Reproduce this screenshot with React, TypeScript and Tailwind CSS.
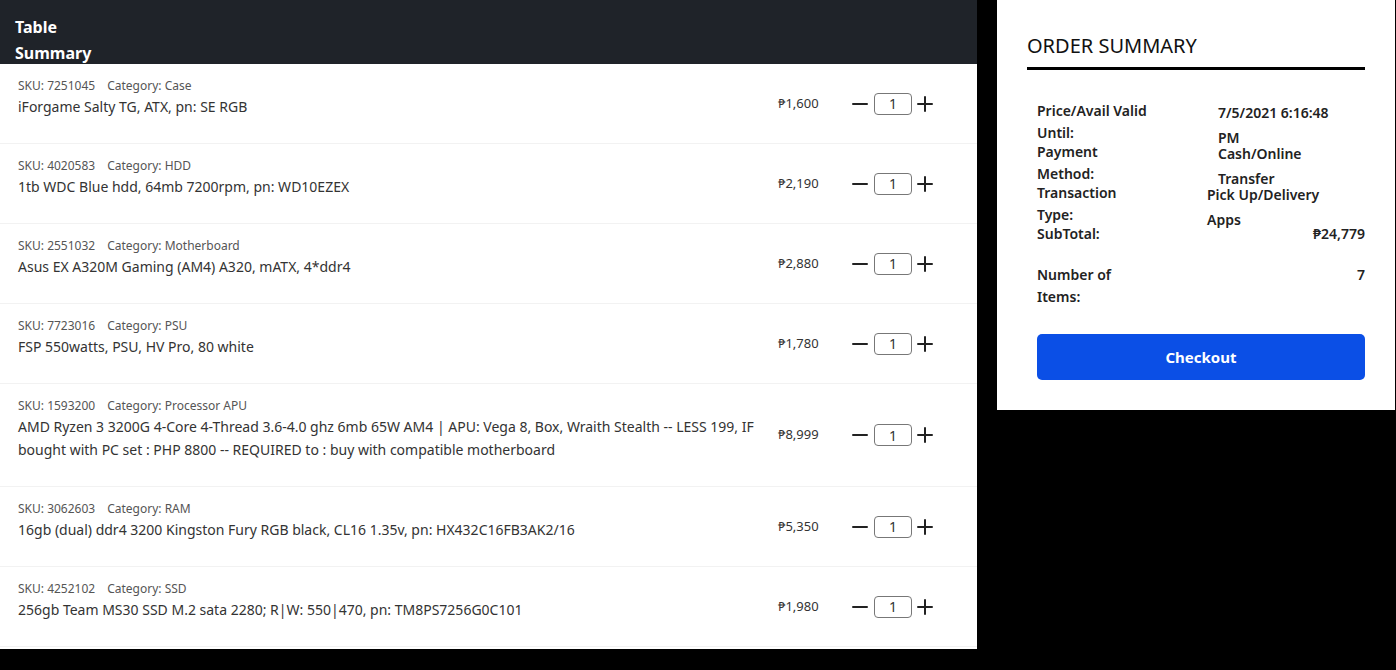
import { Minus, Plus } from 'lucide-react'

interface Item {
  sku: string
  category: string
  name: string
  price: string
}

const items: Item[] = [
  { sku: '7251045', category: 'Case', name: 'iForgame Salty TG, ATX, pn: SE RGB', price: '₱1,600' },
  { sku: '4020583', category: 'HDD', name: '1tb WDC Blue hdd, 64mb 7200rpm, pn: WD10EZEX', price: '₱2,190' },
  { sku: '2551032', category: 'Motherboard', name: 'Asus EX A320M Gaming (AM4) A320, mATX, 4*ddr4', price: '₱2,880' },
  { sku: '7723016', category: 'PSU', name: 'FSP 550watts, PSU, HV Pro, 80 white', price: '₱1,780' },
  {
    sku: '1593200',
    category: 'Processor APU',
    name: 'AMD Ryzen 3 3200G 4-Core 4-Thread 3.6-4.0 ghz 6mb 65W AM4 | APU: Vega 8, Box, Wraith Stealth -- LESS 199, IF bought with PC set : PHP 8800 -- REQUIRED to : buy with compatible motherboard',
    price: '₱8,999',
  },
  { sku: '3062603', category: 'RAM', name: '16gb (dual) ddr4 3200 Kingston Fury RGB black, CL16 1.35v, pn: HX432C16FB3AK2/16', price: '₱5,350' },
  { sku: '4252102', category: 'SSD', name: '256gb Team MS30 SSD M.2 sata 2280; R|W: 550|470, pn: TM8PS7256G0C101', price: '₱1,980' },
]

function ItemRow({ item }: { item: Item }) {
  return (
    <div className="flex items-center border-b border-[#f2f2f2] min-h-[80px]">
      <div className="w-[760px] pl-[18px] pt-[12px] pb-[25px] self-start">
        <div className="text-[12px] leading-[19px] text-[#555]">
          <span>SKU: {item.sku}</span>
          <span className="ml-[12px]">Category: {item.category}</span>
        </div>
        <div className="text-[14px] leading-[23px] text-[#333]">{item.name}</div>
      </div>
      <div className="w-[88px] pl-[18px] text-[13px] text-[#333]">{item.price}</div>
      <div className="flex items-center">
        <button className="flex text-[#222]">
          <Minus size={24} strokeWidth={2} />
        </button>
        <div className="w-[38px] h-[22px] ml-[2px] mr-[1px] border border-[#777] rounded-[4px] text-[14px] text-[#333] flex items-center justify-center">
          1
        </div>
        <button className="flex text-[#222]">
          <Plus size={24} strokeWidth={2} />
        </button>
      </div>
    </div>
  )
}

export default function App() {
  return (
    <div
      className="w-[1396px] h-[670px] bg-black flex items-start overflow-hidden"
      style={{ fontFamily: '"Noto Sans", "Open Sans", sans-serif' }}
    >
      <div className="w-[977px] bg-white pb-[2px]">
        <div className="bg-[#1f2329] h-[64px] pl-[15px] pt-[14px]">
          <div className="w-[90px] text-white font-bold text-[16px] leading-[26px]">Table Summary</div>
        </div>
        {items.map((item) => (
          <ItemRow key={item.sku} item={item} />
        ))}
      </div>

      <div className="ml-[20px] w-[398px] h-[410px] bg-white pt-[33px] px-[30px]">
        <div className="text-[20px] leading-[26px] text-[#111]">ORDER SUMMARY</div>
        <div className="mt-[8px] h-[3px] bg-black" />
        <div className="pl-[10px] pt-[30px] text-[14px] font-semibold text-[#222]">
          <div className="flex h-[41px]">
            <div className="w-[115px] leading-[22px]">Price/Avail Valid Until:</div>
            <div className="ml-[66px] w-[125px] leading-[25px]">7/5/2021 6:16:48 PM</div>
          </div>
          <div className="flex h-[41px]">
            <div className="w-[115px] leading-[22px]">Payment Method:</div>
            <div className="ml-[66px] w-[125px] leading-[25px]">
              Cash/Online
              <br />
              Transfer
            </div>
          </div>
          <div className="flex h-[41px]">
            <div className="w-[115px] leading-[22px]">Transaction Type:</div>
            <div className="ml-[55px] w-[125px] leading-[25px]">Pick Up/Delivery Apps</div>
          </div>
          <div className="flex justify-between h-[30px] leading-[22px]">
            <div>SubTotal:</div>
            <div>₱24,779</div>
          </div>
          <div className="flex justify-between leading-[22px] mt-[11px]">
            <div className="w-[90px]">Number of Items:</div>
            <div>7</div>
          </div>
          <button className="mt-[26px] w-full h-[46px] bg-[#0b4fe6] rounded-[5px] text-white font-bold text-[15px]">
            Checkout
          </button>
        </div>
      </div>
    </div>
  )
}
